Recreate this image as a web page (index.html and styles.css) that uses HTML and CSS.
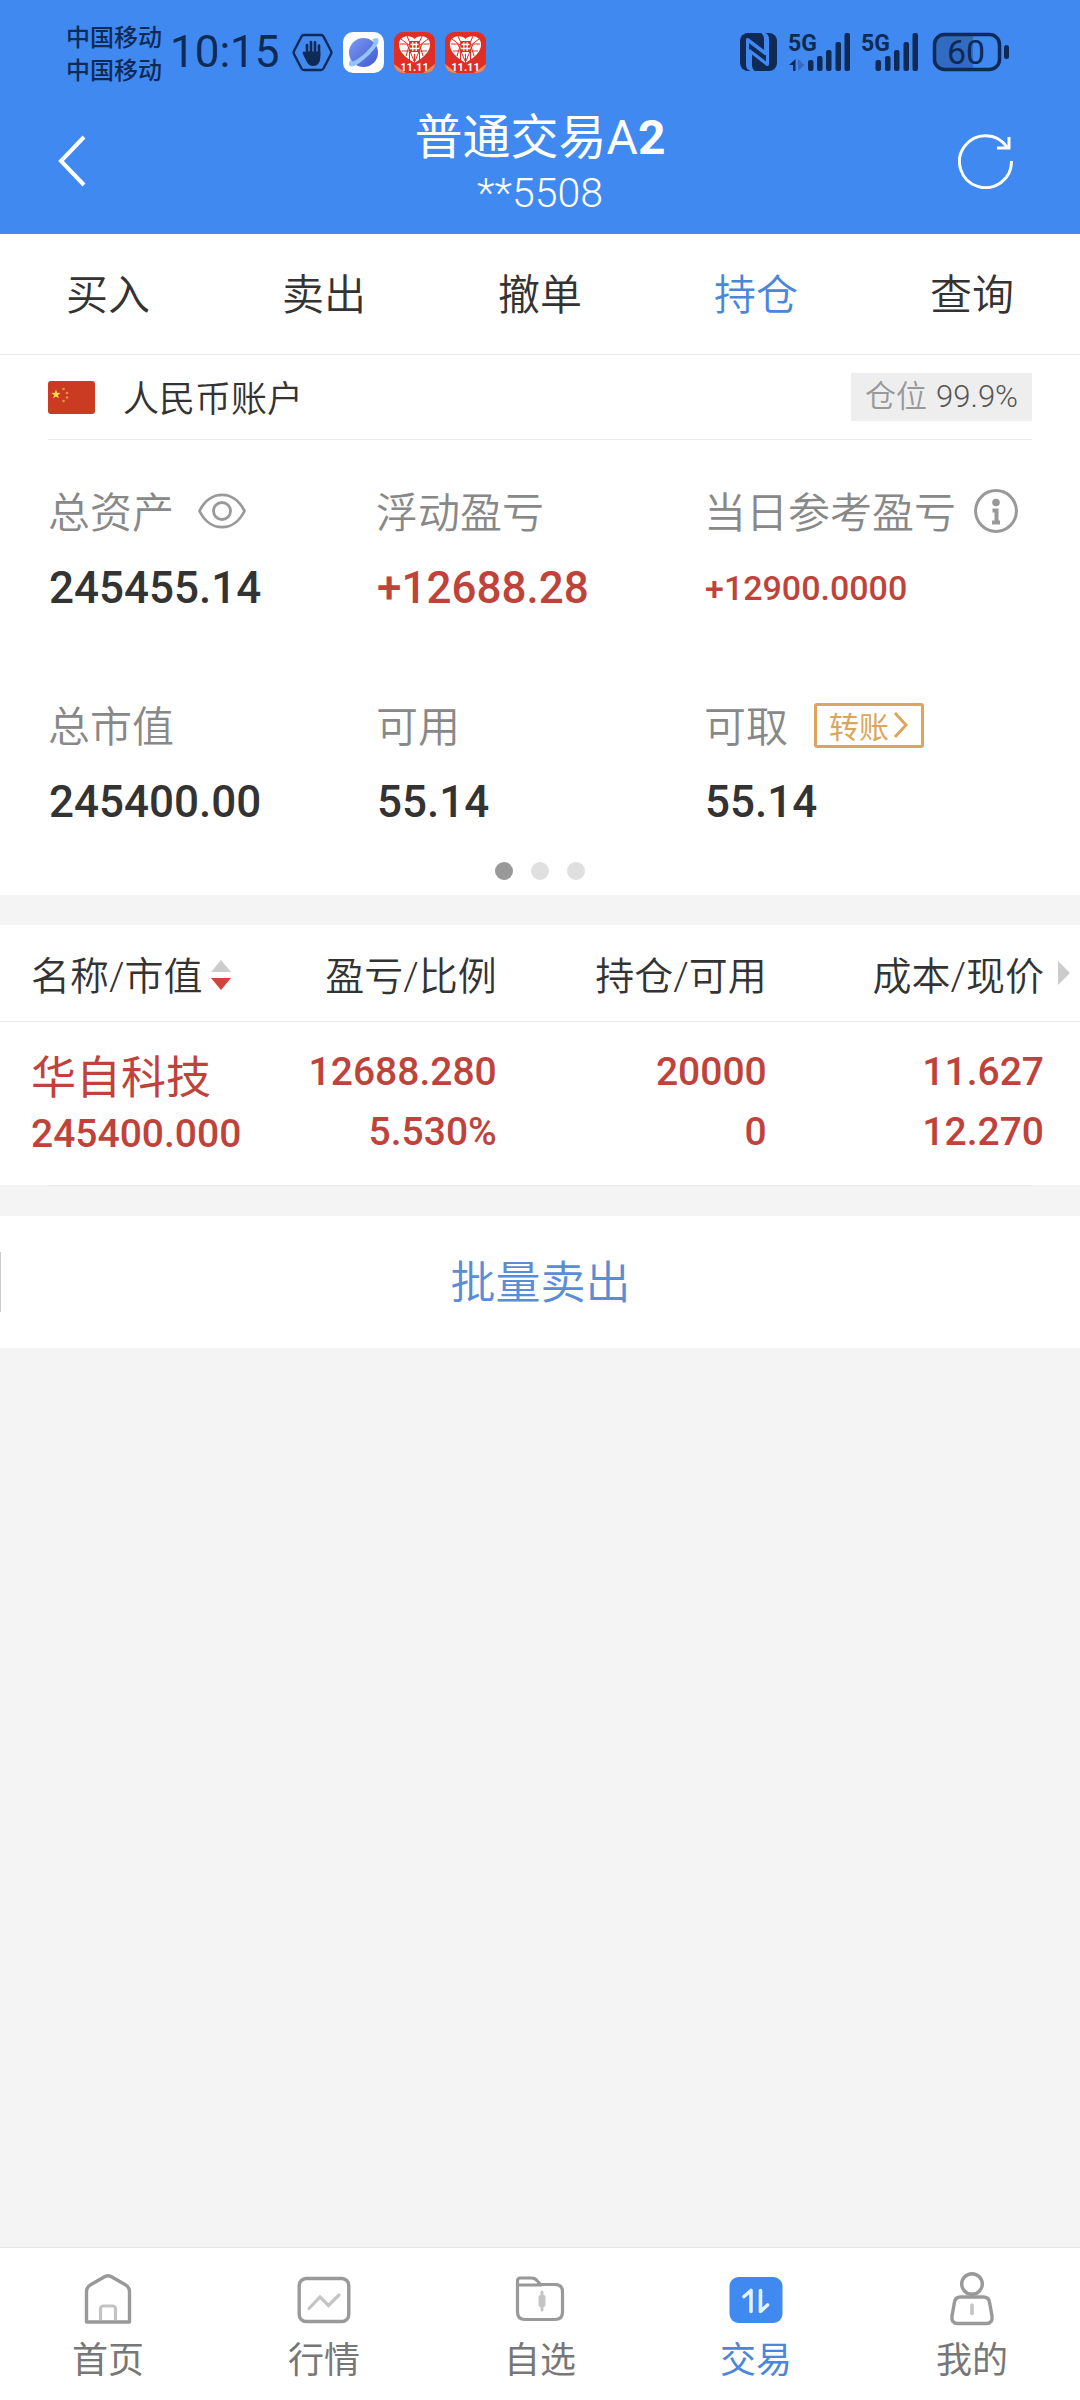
FILE: index.html
```html
<!DOCTYPE html>
<html lang="zh-CN">
<head>
  <meta charset="UTF-8">
  <meta name="viewport" content="width=device-width, initial-scale=1">
  <title>普通交易</title>
  <link rel="stylesheet" href="styles.css">
</head>
<body>

<header class="header">
  <div class="status-bar">
    <div class="status-left">
      <div class="carriers">
        <span>中国移动</span>
        <span>中国移动</span>
      </div>
      <span class="clock">10:15</span>
      <svg class="status-icon" viewBox="0 0 41 40">
        <path d="M12 2.500h17a3 3 0 0 1 2.500 1.500l7.500 14.500a3 3 0 0 1 0 3l-7.500 14.500a3 3 0 0 1-2.500 1.500h-17a3 3 0 0 1-2.500-1.500l-7.500-14.500a3 3 0 0 1 0-3l7.500-14.500a3 3 0 0 1 2.500-1.500z" fill="none" stroke="#0f2a55" stroke-width="2.400"/>
        <path d="M15 23V12.500M19 21V9.500M23 21V9.800M27 23V13" stroke="#0f2a55" stroke-width="2.600" stroke-linecap="round"/>
        <path d="M13.700 19h14.600v6c0 5-3 8.500-7 8.500-3.500 0-5.500-2-7-5l-3.600-7.500c-.6-2 1.500-2.800 3-1z" fill="#0f2a55"/>
      </svg>
      <svg class="status-icon" viewBox="0 0 41 41">
        <defs>
          <linearGradient id="planet" x1="0" y1="0" x2="1" y2="1">
            <stop offset="0" stop-color="#7a9af2"/>
            <stop offset="1" stop-color="#4257d2"/>
          </linearGradient>
        </defs>
        <rect width="41" height="41" rx="10" fill="#fff"/>
        <circle cx="20.500" cy="20.500" r="14.500" fill="url(#planet)"/>
        <path d="M29 8c4-3 7-2.500 6.500 1.500C34.500 16 17 33 9.500 34.500 5 35 5 31 8 27c0 3 2 3 4 1.500C19 25 29 15 30.500 11c.6-1.500 0-2.500-1.500-3z" fill="#93c5fb"/>
      </svg>
      <svg class="status-icon" viewBox="0 0 41 41">
        <defs>
          <clipPath id="appShape"><rect width="41" height="41" rx="9"/></clipPath>
          <g id="shopApp" clip-path="url(#appShape)">
            <rect width="41" height="41" fill="#de2e25"/>
            <path d="M0 32q8 6 12 9H0zM41 32q-8 6-12 9h12z" fill="#f0875c"/>
            <path d="M20.500 7C17 2.500 5 3 5 12.500 5 21 13 26 20.500 31 28 26 36 21 36 12.500 36 3 24 2.500 20.500 7z" fill="#fff"/>
            <path d="M6 12h7l7 17M35 12h-7l-7 17M13 4l3 7-4 13M28 4l-3 7 4 13M8 19h8M25 19h8M15.500 20v8M25.500 20v8M20.500 22v9M7 7l8 6M34 7l-8 6" stroke="#de2e25" stroke-width="1" fill="none"/>
            <rect x="15.500" y="9" width="10" height="11" fill="#de2e25"/>
            <path d="M16.500 12.500h8M16 16.500h9M18.800 10v9M22.200 10v9" stroke="#fff" stroke-width="1.300"/>
            <text x="20.500" y="39" text-anchor="middle" class="app-label">11.11</text>
          </g>
        </defs>
        <use href="#shopApp"/>
      </svg>
      <svg class="status-icon" viewBox="0 0 41 41"><use href="#shopApp"/></svg>
    </div>

    <svg class="status-right" viewBox="0 -8 270 56" width="270" height="56">
      <g fill="#0f2a55">
        <rect x="0" y="1" width="37" height="38" rx="8"/>
        <path d="M6 8q0-3 3-1.500L24 18V7q0-4-3-6h4q4 1 4 6v25q0 3-3 1.500L12 22.500V33q0 4 3 6h-4q-5-1-5-6z" fill="#4089f1"/>
        <path d="M9 10l17 12.500v8L9 17.500z" fill="#0f2a55"/>
        <path d="M9 9.500l17 13M9 18l17 13" stroke="#4089f1" stroke-width="2.600"/>
        <text x="48" y="19" class="net-label">5G</text>
        <path d="M55.500 27v12h-2.500v-6h-4z"/>
        <path d="M58 27v12l6.500-6z" opacity=".3"/>
        <rect x="68" y="28" width="5.500" height="11" rx="2"/>
        <rect x="77" y="24" width="5.500" height="15" rx="2"/>
        <rect x="86" y="18" width="5.500" height="21" rx="2"/>
        <rect x="95.500" y="10" width="5.500" height="29" rx="2"/>
        <rect x="104.500" y="1" width="5.500" height="38" rx="2"/>
        <text x="121" y="19" class="net-label">5G</text>
        <rect x="135.500" y="28" width="5.500" height="11" rx="2"/>
        <rect x="145" y="24" width="5.500" height="15" rx="2"/>
        <rect x="154" y="18" width="5.500" height="21" rx="2"/>
        <rect x="163.500" y="10" width="5.500" height="29" rx="2"/>
        <rect x="172.500" y="1" width="5.500" height="38" rx="2"/>
        <path d="M204 3h29v34h-29a9 9 0 0 1-9-9V12a9 9 0 0 1 9-9z" opacity=".3"/>
        <rect x="194.500" y="2.500" width="65" height="35" rx="10" fill="none" stroke="#0f2a55" stroke-width="3.500"/>
        <rect x="264" y="13" width="5" height="14" rx="2.500"/>
        <text x="226" y="32" text-anchor="middle" class="battery-label">60</text>
      </g>
    </svg>
  </div>

  <div class="title-bar">
    <button class="back" type="button" aria-label="返回">
      <svg viewBox="0 0 30 52" width="30" height="52">
        <path d="M28 2L5 26l23 24" fill="none" stroke="#fff" stroke-width="4"/>
      </svg>
    </button>
    <div class="title">
      <h1>普通交易A<b>2</b></h1>
      <p>**5508</p>
    </div>
    <button class="refresh" type="button" aria-label="刷新">
      <svg viewBox="0 0 56 56" width="56" height="56">
        <path d="M53.500 28A26 26 0 1 1 49 14" fill="none" stroke="#fff" stroke-width="3"/>
        <path d="M51 4v11H39" fill="none" stroke="#fff" stroke-width="3"/>
      </svg>
    </button>
  </div>
</header>

<nav class="tabs">
  <a href="#buy">买入</a>
  <a href="#sell">卖出</a>
  <a href="#cancel">撤单</a>
  <a href="#position" class="active">持仓</a>
  <a href="#query">查询</a>
</nav>

<main>
  <section class="account">
    <div class="account-row">
      <svg class="flag" viewBox="0 0 47 33" width="47" height="33">
        <rect width="47" height="33" rx="3" fill="#cb3a23"/>
        <path d="M8 8.500l1.200 3.300 3.500.1-2.800 2.100 1 3.300L8 15.400l-2.900 1.900 1-3.300-2.800-2.100 3.500-.1z" fill="#f9d94a"/>
        <g fill="#e8953a">
          <circle cx="15.500" cy="8" r="1.300"/>
          <circle cx="19" cy="12" r="1.300"/>
          <circle cx="19" cy="16.500" r="1.300"/>
          <circle cx="15.500" cy="20" r="1.300"/>
        </g>
      </svg>
      <span class="account-name">人民币账户</span>
      <span class="ratio">仓位<b>99.9%</b></span>
    </div>

    <dl class="stats">
      <div>
        <dt>总资产
          <svg class="eye" viewBox="0 0 48 36" width="48" height="36">
            <path d="M1.500 18C12-3.500 36-3.500 46.500 18 36 39.500 12 39.500 1.500 18z" fill="none" stroke="#999" stroke-width="2.800"/>
            <circle cx="24" cy="18" r="8.500" fill="none" stroke="#999" stroke-width="2.800"/>
          </svg>
        </dt>
        <dd>245455.14</dd>
      </div>
      <div>
        <dt>浮动盈亏</dt>
        <dd class="red">+12688.28</dd>
      </div>
      <div>
        <dt>当日参考盈亏
          <svg class="info" viewBox="0 0 44 44" width="44" height="44">
            <circle cx="22" cy="22" r="20.400" fill="none" stroke="#999" stroke-width="3"/>
            <circle cx="22" cy="13.500" r="3.800" fill="#999"/>
            <path d="M18.500 21.500h4v12M18 33.500h8" fill="none" stroke="#999" stroke-width="4"/>
          </svg>
        </dt>
        <dd class="red small">+12900.0000</dd>
      </div>
      <div>
        <dt>总市值</dt>
        <dd>245400.00</dd>
      </div>
      <div>
        <dt>可用</dt>
        <dd>55.14</dd>
      </div>
      <div>
        <dt>可取
          <button class="transfer" type="button">转账
            <svg viewBox="0 0 16 28" width="16" height="28">
              <path d="M2 2l11 12L2 26" fill="none" stroke="#dba65c" stroke-width="3"/>
            </svg>
          </button>
        </dt>
        <dd>55.14</dd>
      </div>
    </dl>

    <div class="dots">
      <span class="current"></span>
      <span></span>
      <span></span>
    </div>
  </section>

  <section class="holdings">
    <table>
      <thead>
        <tr>
          <th>名称/市值<svg class="sort" viewBox="0 0 20 30" width="20" height="30">
              <path d="M10 0l10 12H0z" fill="#ccc"/>
              <path d="M0 18h20L10 30z" fill="#d0443b"/>
            </svg></th>
          <th>盈亏/比例</th>
          <th>持仓/可用</th>
          <th>成本/现价<svg class="more" viewBox="0 0 12 24" width="12" height="24">
              <path d="M0 0l12 12L0 24z" fill="#ccc"/>
            </svg></th>
        </tr>
      </thead>
      <tbody>
        <tr>
          <td><span class="stock">华自科技</span>245400.000</td>
          <td>12688.280<br>5.530%</td>
          <td>20000<br>0</td>
          <td>11.627<br>12.270</td>
        </tr>
      </tbody>
    </table>
  </section>

  <div class="divider"></div>

  <section class="batch">
    <button type="button">批量卖出</button>
  </section>
</main>

<nav class="bottom-nav">
  <a href="#home">
    <svg viewBox="0 0 54 54" width="54" height="54">
      <path d="M5.500 50V20c0-4 1.500-6 4.500-7.500L24 4.500q3-1.500 6 0l14 8c3 1.500 4.500 3.500 4.500 7.500v30z" fill="none" stroke="#999" stroke-width="3.400" stroke-linejoin="round"/>
      <path d="M19.500 48V37q0-3 3-3h9q3 0 3 3v11" fill="none" stroke="#c4c4c4" stroke-width="3.200"/>
    </svg>
    首页
  </a>
  <a href="#market">
    <svg viewBox="0 0 54 54" width="54" height="54">
      <rect x="2.200" y="6.500" width="49.600" height="43" rx="7" fill="none" stroke="#999" stroke-width="3.400"/>
      <path d="M12 36.500L23 25l8.500 8.500L42 23" fill="none" stroke="#c4c4c4" stroke-width="3.200" stroke-linecap="round"/>
    </svg>
    行情
  </a>
  <a href="#favorites">
    <svg viewBox="0 0 54 54" width="54" height="54">
      <path d="M4.500 13V9q0-3 3-3h11q3 0 5 2l4 4.500H42q7.500 0 7.500 7.500v20q0 7.500-7.500 7.500H12q-7.500 0-7.500-7.500V13h24" fill="none" stroke="#999" stroke-width="3.200"/>
      <path d="M29 20v18" stroke="#c4c4c4" stroke-width="3" stroke-linecap="round"/>
      <rect x="25.500" y="23" width="7" height="12" rx="2" fill="#c4c4c4"/>
    </svg>
    自选
  </a>
  <a href="#trade" class="active">
    <svg viewBox="0 0 54 54" width="54" height="54">
      <rect x=".5" y="5" width="53" height="46" rx="9" fill="#4089f1"/>
      <path d="M15 24.500l7-6v21M31.500 18.500v21l7-6.500" fill="none" stroke="#e6f1ff" stroke-width="3.600" stroke-linecap="round" stroke-linejoin="round"/>
    </svg>
    交易
  </a>
  <a href="#mine">
    <svg viewBox="0 0 54 54" width="54" height="54">
      <circle cx="27" cy="12" r="10.300" fill="none" stroke="#999" stroke-width="3.400"/>
      <path d="M15.500 25h23q5 0 6 5l2.500 14q1 7.500-6 7.500H13q-7 0-6-7.500L9.500 30q1-5 6-5z" fill="none" stroke="#999" stroke-width="3.400"/>
      <path d="M27 33v8.500" stroke="#c4c4c4" stroke-width="3.600" stroke-linecap="round"/>
    </svg>
    我的
  </a>
</nav>

</body>
</html>
```
FILE: styles.css
```css
* {
  box-sizing: border-box;
}

body {
  margin: 0;
  min-height: 100vh;
  display: flex;
  flex-direction: column;
  background: #f4f4f4;
  color: #333;
  font-family: Roboto, "Noto Sans CJK SC", sans-serif;
  font-weight: 350;
}

a {
  color: inherit;
  text-decoration: none;
}

button {
  font: inherit;
  color: inherit;
  background: none;
  border: none;
  padding: 0;
  cursor: pointer;
}

svg {
  display: block;
}

/* header */
.header {
  background: #4089f1;
  color: #fff;
}

.status-bar {
  height: 104px;
  padding: 0 70px 0 66px;
  display: flex;
  justify-content: space-between;
  align-items: center;
  color: #0f2a55;
}

.status-left {
  display: flex;
  align-items: center;
  gap: 10px;
}

.carriers {
  display: flex;
  flex-direction: column;
  padding-top: 6px;
  font-size: 24px;
  line-height: 33px;
  font-weight: 500;
}

.clock {
  margin: 0 2px 0 -2px;
  font-size: 44px;
  font-weight: 400;
}

.status-icon {
  width: 41px;
  height: 41px;
}

.app-label {
  font-size: 11px;
  font-weight: 700;
  fill: #fff;
}

.net-label {
  font-size: 23px;
  font-weight: 700;
}

.battery-label {
  font-size: 34px;
  font-weight: 400;
}

.title-bar {
  padding: 0 66px 16px 56px;
  display: flex;
  justify-content: space-between;
  align-items: center;
}

.title {
  padding-top: 4px;
  text-align: center;
}

.title h1 {
  margin: 0;
  font-size: 48px;
  line-height: 60px;
  font-weight: 400;
}

.title b {
  font-weight: 700;
}

.title p {
  margin: 0;
  font-size: 41px;
  line-height: 50px;
  font-weight: 300;
}

.back {
  width: 66px;
}

.refresh {
  width: 56px;
}

/* top tabs */
.tabs {
  display: flex;
  background: #fff;
  border-bottom: 1px solid #ebebeb;
}

.tabs a {
  flex: 1;
  padding-top: 4px;
  text-align: center;
  font-size: 42px;
  line-height: 116px;
}

.active {
  color: #4a87da;
}

/* account summary */
.account {
  background: #fff;
  padding: 0 48px 15px;
  margin-bottom: 30px;
}

.account-row {
  height: 85px;
  display: flex;
  align-items: center;
  border-bottom: 1px solid #ebebeb;
}

.account-name {
  margin-left: 28px;
  padding-bottom: 3px;
  font-size: 36px;
}

.ratio {
  margin-left: auto;
  padding: 0 14px;
  font-size: 31px;
  line-height: 48px;
  background: #eee;
  color: #999;
}

.ratio b {
  margin-left: 9px;
  font-weight: 300;
  color: #555;
}

.stats {
  margin: 0;
  padding-top: 39px;
  display: grid;
  grid-template-columns: repeat(3, 1fr);
  row-gap: 75px;
}

.stats dt {
  display: flex;
  align-items: center;
  height: 60px;
  font-size: 42px;
  color: #888;
  white-space: nowrap;
}

.stats dd {
  margin: 19px 0 0;
  font-size: 44px;
  line-height: 60px;
  font-weight: 500;
  padding-left: 1px;
}

.stats .small {
  font-size: 34px;
}

.eye {
  margin-top: 4px;
  margin-left: 24px;
}

.info {
  margin-top: 4px;
  margin-left: 18px;
}

.red {
  color: #c0433b;
}

.transfer {
  display: flex;
  align-items: center;
  gap: 4px;
  margin-top: 4px;
  margin-left: 26px;
  padding: 0 12px;
  height: 45px;
  border: 3px solid #dba65c;
  border-radius: 3px;
  color: #dba65c;
  font-size: 30px;
  font-weight: 400;
}

.dots {
  display: flex;
  justify-content: center;
  gap: 18px;
  margin-top: 30px;
}

.dots span {
  width: 18px;
  height: 18px;
  border-radius: 50%;
  background: #e0e0e0;
}

.dots .current {
  background: #999;
}

/* holdings table */
.holdings {
  background: #fff;
}

.holdings table {
  width: 100%;
  table-layout: fixed;
  border-collapse: collapse;
}

.holdings th {
  position: relative;
  width: 25%;
  height: 96px;
  padding: 0;
  border-bottom: 1px solid #ebebeb;
  font-size: 39px;
  font-weight: 350;
  text-align: right;
  white-space: nowrap;
}

.holdings th:first-child {
  width: 24%;
}

.holdings th:nth-child(2) {
  width: 22%;
}

.holdings th:last-child {
  width: 29%;
}

.holdings th:first-child,
.holdings td:first-child {
  text-align: left;
  padding-left: 31px;
}

.holdings th:last-child,
.holdings td:last-child {
  padding-right: 36px;
}

.sort {
  display: inline-block;
  margin-left: 8px;
}

/* scroll hint in the right gutter */
.more {
  position: absolute;
  right: 10px;
  top: 36px;
}

.holdings td {
  padding: 20px 0 21px;
  color: #c0433b;
  font-size: 39px;
  line-height: 60px;
  font-weight: 500;
  text-align: right;
  vertical-align: top;
}

.stock {
  display: block;
  padding-top: 12px;
  font-size: 45px;
  line-height: 50px;
  font-weight: 400;
}

.divider {
  height: 31px;
  margin: 0 48px;
  border-top: 1px solid #e9e9e9;
}

/* batch sell */
.batch {
  display: flex;
  align-items: center;
  background: #fff;
}

.batch::before {
  content: "";
  width: 1px;
  height: 60px;
  background: #ccc;
}

.batch button {
  flex: 1;
  padding-top: 4px;
  font-size: 45px;
  line-height: 128px;
  color: #5b8cd6;
}

/* bottom navigation */
.bottom-nav {
  margin-top: auto;
  display: flex;
  background: #fff;
  border-top: 1px solid #e6e6e6;
  padding: 24px 0 14px;
}

.bottom-nav a {
  flex: 1;
  display: flex;
  flex-direction: column;
  align-items: center;
  gap: 10px;
  font-size: 36px;
  line-height: 50px;
  font-weight: 400;
  color: #777;
}

.bottom-nav .active {
  color: #4a87da;
}
```
